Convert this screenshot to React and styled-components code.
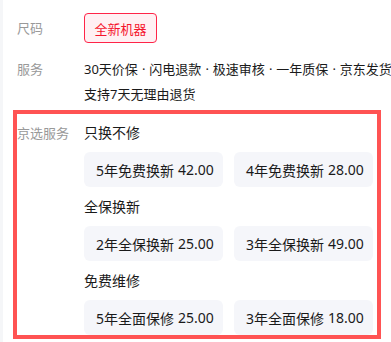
import React from "react";
import styled, { createGlobalStyle } from "styled-components";

const Global = createGlobalStyle`
  html, body { margin: 0; padding: 0; background: #f5f6f8; }
  body { font-family: "Noto Sans", "Noto Sans CJK SC", sans-serif; color: #1a1a1a; overflow: hidden; }
`;

const Card = styled.div`
  margin-left: 3px;
  background: #fff;
  height: 342px;
  box-sizing: border-box;
  padding: 13px 0 0 14px;
  overflow: hidden;
`;

const Row = styled.div`
  display: grid;
  grid-template-columns: 67px 1fr;
  align-items: ${(p) => (p.$center ? "center" : "start")};
  margin-top: ${(p) => p.$mt || 0}px;
`;

const Label = styled.div`
  font-size: 13px;
  color: #999;
  line-height: ${(p) => p.$lh || 20}px;
  white-space: nowrap;
`;

const Tag = styled.span`
  justify-self: start;
  box-sizing: border-box;
  height: 30px;
  width: 73px;
  display: flex;
  align-items: center;
  justify-content: center;
  font-size: 13px;
  color: #f5142d;
  background: #fff0f3;
  border: 1px solid #ff2448;
  border-radius: 4px;
`;

const ServiceText = styled.div`
  font-size: 13px;
  line-height: 25px;
  color: #1a1a1a;
  white-space: nowrap;
`;

const Dot = styled.span`
  margin: 0 4px;
`;

const Highlight = styled.section`
  margin-top: 3px;
  margin-left: -4px;
  width: 368px;
  box-sizing: border-box;
  border: 4px solid #ff5353;
  padding-top: 9px;
  display: grid;
  grid-template-columns: 67px 1fr;
  align-items: start;
`;

const Groups = styled.div`
  display: flex;
  flex-direction: column;
`;

const GroupTitle = styled.div`
  font-size: 14px;
  line-height: 20px;
  margin-top: ${(p) => (p.$first ? 0 : 10)}px;
  margin-bottom: 9px;
`;

const Options = styled.div`
  display: grid;
  grid-template-columns: 139px 139px;
  column-gap: 11px;
`;

const Option = styled.button`
  all: unset;
  box-sizing: border-box;
  height: 35px;
  padding: 0 12px;
  display: flex;
  align-items: center;
  gap: 4px;
  background: #f5f6fa;
  border-radius: 6px;
  font-family: "Noto Sans", "Noto Sans CJK SC", sans-serif;
  font-size: 14px;
  color: #1a1a1a;
  white-space: nowrap;
`;

const services = ["30天价保", "闪电退款", "极速审核", "一年质保", "京东发货"];

const groups = [
  { title: "只换不修", items: [["5年免费换新", "42.00"], ["4年免费换新", "28.00"]] },
  { title: "全保换新", items: [["2年全保换新", "25.00"], ["3年全保换新", "49.00"]] },
  { title: "免费维修", items: [["5年全面保修", "25.00"], ["3年全面保修", "18.00"]] },
];

export default function App() {
  return (
    <>
      <Global />
      <Card>
        <Row $center>
          <Label>尺码</Label>
          <Tag>全新机器</Tag>
        </Row>
        <Row $mt={14}>
          <Label $lh={25}>服务</Label>
          <div>
            <ServiceText>
              {services.map((s, i) => (
                <React.Fragment key={s}>
                  {i > 0 && <Dot>·</Dot>}
                  {s}
                </React.Fragment>
              ))}
            </ServiceText>
            <ServiceText>支持7天无理由退货</ServiceText>
          </div>
        </Row>
        <Highlight>
          <Label>京选服务</Label>
          <Groups>
            {groups.map((g, i) => (
              <React.Fragment key={g.title}>
                <GroupTitle $first={i === 0}>{g.title}</GroupTitle>
                <Options>
                  {g.items.map(([name, price]) => (
                    <Option key={name}>
                      <span>{name}</span>
                      <span>{price}</span>
                    </Option>
                  ))}
                </Options>
              </React.Fragment>
            ))}
          </Groups>
        </Highlight>
      </Card>
    </>
  );
}
